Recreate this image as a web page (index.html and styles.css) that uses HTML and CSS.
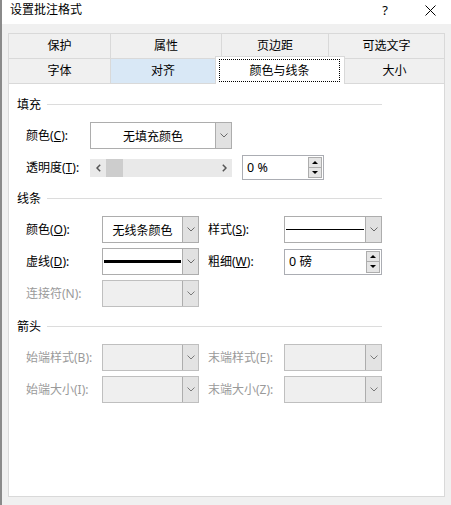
FILE: index.html
```html
<!DOCTYPE html>
<html lang="zh-CN">
<head>
<meta charset="utf-8">
<title>设置批注格式</title>
<link rel="stylesheet" href="styles.css">
</head>
<body>
<div class="window">
  <div class="titlebar">
    <span class="title">设置批注格式</span>
    <span class="help">?</span>
    <svg class="close" width="11" height="11" viewBox="0 0 11 11"><path d="M0.5 0.5 L10.5 10.5 M10.5 0.5 L0.5 10.5" stroke="#000" stroke-width="1" fill="none"/></svg>
  </div>

  <div class="tabs">
    <div class="tabrow">
      <div class="tab w102">保护</div>
      <div class="tab w111">属性</div>
      <div class="tab w107">页边距</div>
      <div class="tab w117 last">可选文字</div>
    </div>
    <div class="tabrow">
      <div class="tab w102">字体</div>
      <div class="tab w105 hover">对齐</div>
      <div class="tab w130 selected"><span class="focus">颜色与线条</span></div>
      <div class="tab w100 last">大小</div>
    </div>
  </div>

  <div class="panel">
    <div class="sec-head s1"><span>填充</span><i class="rule"></i></div>
    <div class="row mt9">
      <span class="lbl w64">颜色(<u>C</u>):</span>
      <div class="combo w142">
        <span class="val center">无填充颜色</span>
        <span class="btn"><svg width="8" height="5" viewBox="0 0 8 5"><path d="M0.5 0.5 L4 4 L7.5 0.5" fill="none" stroke="#6a6a6a"/></svg></span>
      </div>
    </div>
    <div class="row mt6 h25">
      <span class="lbl w64">透明度(<u>T</u>):</span>
      <div class="scroll">
        <span class="arrow"><svg width="5" height="8" viewBox="0 0 5 8"><path d="M4.2 0.8 L1 4 L4.2 7.2" fill="none" stroke="#555" stroke-width="1.5"/></svg></span>
        <span class="thumb"></span>
        <span class="track"></span>
        <span class="arrow"><svg width="5" height="8" viewBox="0 0 5 8"><path d="M0.8 0.8 L4 4 L0.8 7.2" fill="none" stroke="#555" stroke-width="1.5"/></svg></span>
      </div>
      <div class="spin w82 ml10">
        <span class="txt">0 %</span>
        <span class="spin-btns"><span class="sb"><i class="tri-up"></i></span><span class="sb"><i class="tri-down"></i></span></span>
      </div>
    </div>

    <div class="sec-head s2"><span>线条</span><i class="rule"></i></div>
    <div class="row mt9">
      <span class="lbl w76">颜色(<u>O</u>):</span>
      <div class="combo w97">
        <span class="val center">无线条颜色</span>
        <span class="btn"><svg width="8" height="5" viewBox="0 0 8 5"><path d="M0.5 0.5 L4 4 L7.5 0.5" fill="none" stroke="#6a6a6a"/></svg></span>
      </div>
      <span class="lbl w76 ml9">样式(<u>S</u>):</span>
      <div class="combo w98">
        <span class="val"><i class="stroke thin"></i></span>
        <span class="btn"><svg width="8" height="5" viewBox="0 0 8 5"><path d="M0.5 0.5 L4 4 L7.5 0.5" fill="none" stroke="#6a6a6a"/></svg></span>
      </div>
    </div>
    <div class="row mt5">
      <span class="lbl w76">虚线(<u>D</u>):</span>
      <div class="combo w97">
        <span class="val"><i class="stroke thick"></i></span>
        <span class="btn"><svg width="8" height="5" viewBox="0 0 8 5"><path d="M0.5 0.5 L4 4 L7.5 0.5" fill="none" stroke="#6a6a6a"/></svg></span>
      </div>
      <span class="lbl w76 ml9">粗细(<u>W</u>):</span>
      <div class="spin w98 h26">
        <span class="txt">0 磅</span>
        <span class="spin-btns"><span class="sb"><i class="tri-up"></i></span><span class="sb"><i class="tri-down"></i></span></span>
      </div>
    </div>
    <div class="row mt5">
      <span class="lbl w76 dis">连接符(N):</span>
      <div class="combo w97 disabled">
        <span class="val"></span>
        <span class="btn"><svg width="8" height="5" viewBox="0 0 8 5"><path d="M0.5 0.5 L4 4 L7.5 0.5" fill="none" stroke="#7a7a7a"/></svg></span>
      </div>
    </div>

    <div class="sec-head s3"><span>箭头</span><i class="rule"></i></div>
    <div class="row mt9">
      <span class="lbl w76 dis">始端样式(B):</span>
      <div class="combo w97 disabled">
        <span class="val"></span>
        <span class="btn"><svg width="8" height="5" viewBox="0 0 8 5"><path d="M0.5 0.5 L4 4 L7.5 0.5" fill="none" stroke="#7a7a7a"/></svg></span>
      </div>
      <span class="lbl w76 ml9 dis">末端样式(E):</span>
      <div class="combo w98 disabled">
        <span class="val"></span>
        <span class="btn"><svg width="8" height="5" viewBox="0 0 8 5"><path d="M0.5 0.5 L4 4 L7.5 0.5" fill="none" stroke="#7a7a7a"/></svg></span>
      </div>
    </div>
    <div class="row mt5">
      <span class="lbl w76 dis">始端大小(I):</span>
      <div class="combo w97 disabled">
        <span class="val"></span>
        <span class="btn"><svg width="8" height="5" viewBox="0 0 8 5"><path d="M0.5 0.5 L4 4 L7.5 0.5" fill="none" stroke="#7a7a7a"/></svg></span>
      </div>
      <span class="lbl w76 ml9 dis">末端大小(Z):</span>
      <div class="combo w98 disabled">
        <span class="val"></span>
        <span class="btn"><svg width="8" height="5" viewBox="0 0 8 5"><path d="M0.5 0.5 L4 4 L7.5 0.5" fill="none" stroke="#7a7a7a"/></svg></span>
      </div>
    </div>
  </div>
</div>
</body>
</html>
```

FILE: styles.css
```css
html, body {
  margin: 0;
  padding: 0;
}
body {
  background: #f0f0f0;
  font-family: "Noto Sans", "Noto Sans CJK SC", sans-serif;
  font-size: 12px;
  color: #000;
}
.window {
  width: 451px;
  height: 505px;
  box-sizing: border-box;
  border-left: 2px solid #8a8a8a;
  overflow: hidden;
}

/* title bar */
.titlebar {
  height: 24px;
  background: #fff;
  display: flex;
  align-items: flex-start;
}
.title {
  margin-left: 8px;
  line-height: 20px;
}
.help {
  margin-left: auto;
  line-height: 20px;
  font-size: 13px;
  margin-right: 37px;
}
.close {
  margin-top: 5px;
  margin-right: 15px;
}

/* tabs */
.tabs {
  margin-top: 9px;
  margin-left: 6px;
  width: 437px;
}
.tabrow {
  display: flex;
  height: 25px;
}
.tab {
  box-sizing: border-box;
  border-top: 1px solid #d9d9d9;
  border-left: 1px solid #d9d9d9;
  display: flex;
  align-items: center;
  justify-content: center;
  line-height: 16px;
}
.tab.last { border-right: 1px solid #d9d9d9; }
.tab.hover { background: #d9e8f6; }
.tab.selected {
  position: relative;
  z-index: 2;
  background: #fff;
  border-right: 1px solid #d9d9d9;
  margin-top: -2px;
  margin-bottom: -1px;
  padding: 2px 4px 2px 3px;
  align-items: stretch;
}
.tab.selected + .tab { border-left: none; }
.focus {
  flex: 1;
  border: 1px dotted #000;
  display: flex;
  align-items: center;
  justify-content: center;
}
.w100 { width: 100px; }
.w102 { width: 102px; }
.w105 { width: 105px; }
.w107 { width: 107px; }
.w111 { width: 111px; }
.w117 { width: 117px; }
.w130 { width: 130px; }

/* panel */
.panel {
  margin-left: 6px;
  width: 437px;
  height: 414px;
  box-sizing: border-box;
  background: #fff;
  border: 1px solid #d9d9d9;
}
.sec-head {
  display: flex;
  align-items: center;
  height: 16px;
  line-height: 16px;
  padding-left: 8px;
  padding-right: 62px;
}
.sec-head .rule {
  flex: 1;
  height: 1px;
  background: #dcdcdc;
  margin-left: 6px;
  margin-top: -2px;
}
.s1 { margin-top: 13px; }
.s2 { margin-top: 11px; }
.s3 { margin-top: 12px; }

.row {
  display: flex;
  align-items: center;
  height: 27px;
  padding-left: 17px;
}
.row.h25 { height: 25px; }
.mt5 { margin-top: 5px; }
.mt6 { margin-top: 6px; }
.mt9 { margin-top: 9px; }
.ml9 { margin-left: 9px; }
.ml10 { margin-left: 10px; }

.lbl {
  flex: none;
  line-height: 16px;
  white-space: nowrap;
}
.lbl.dis { color: #9a9a9a; }
.w64 { width: 64px; }
.w76 { width: 76px; }
.w82 { width: 82px; }
.w97 { width: 97px; }
.w98 { width: 98px; }
.w142 { width: 142px; }

/* combo box */
.combo {
  flex: none;
  box-sizing: border-box;
  height: 27px;
  border: 1px solid #adadad;
  background: #fff;
  display: flex;
}
.combo .val {
  flex: 1;
  display: flex;
  align-items: center;
  padding: 0 1px;
  min-width: 0;
}
.combo .val.center { justify-content: center; }
.combo .btn {
  width: 15px;
  border-left: 1px solid #adadad;
  background: #e1e1e1;
  display: flex;
  align-items: center;
  justify-content: center;
}
.combo.disabled {
  background: #efefef;
  border-color: #bfbfbf;
}
.combo.disabled .btn {
  background: #e3e3e3;
  border-left-color: #adadad;
}
.stroke {
  display: block;
  flex: 1;
  background: #000;
}
.stroke.thin { height: 1px; }
.stroke.thick { height: 3px; }

/* scrollbar */
.scroll {
  flex: none;
  width: 142px;
  height: 18px;
  background: #e9e9e9;
  display: flex;
  align-items: stretch;
}
.scroll .arrow {
  width: 16px;
  display: flex;
  align-items: center;
  justify-content: center;
}
.scroll .thumb {
  width: 17px;
  background: #cdcdcd;
}
.scroll .track { flex: 1; }

/* spin box */
.spin {
  flex: none;
  box-sizing: border-box;
  height: 25px;
  border: 1px solid #abadb3;
  background: #fff;
  display: flex;
  align-items: center;
  padding-left: 4px;
}
.spin.h26 { height: 26px; }
.spin .txt {
  flex: 1;
  line-height: 16px;
  font-size: 12.5px;
}
.spin-btns {
  width: 14px;
  margin-right: 1px;
  display: flex;
  flex-direction: column;
  align-self: stretch;
  padding: 1px 0;
  box-sizing: border-box;
}
.sb {
  flex: 1;
  box-sizing: border-box;
  border: 1px solid #adadad;
  background: #e5e5e5;
  display: flex;
  align-items: center;
  justify-content: center;
}
.sb + .sb { border-top: none; }
.tri-up {
  width: 0;
  height: 0;
  border-left: 3px solid transparent;
  border-right: 3px solid transparent;
  border-bottom: 3px solid #000;
}
.tri-down {
  width: 0;
  height: 0;
  border-left: 3px solid transparent;
  border-right: 3px solid transparent;
  border-top: 3px solid #000;
}
```
